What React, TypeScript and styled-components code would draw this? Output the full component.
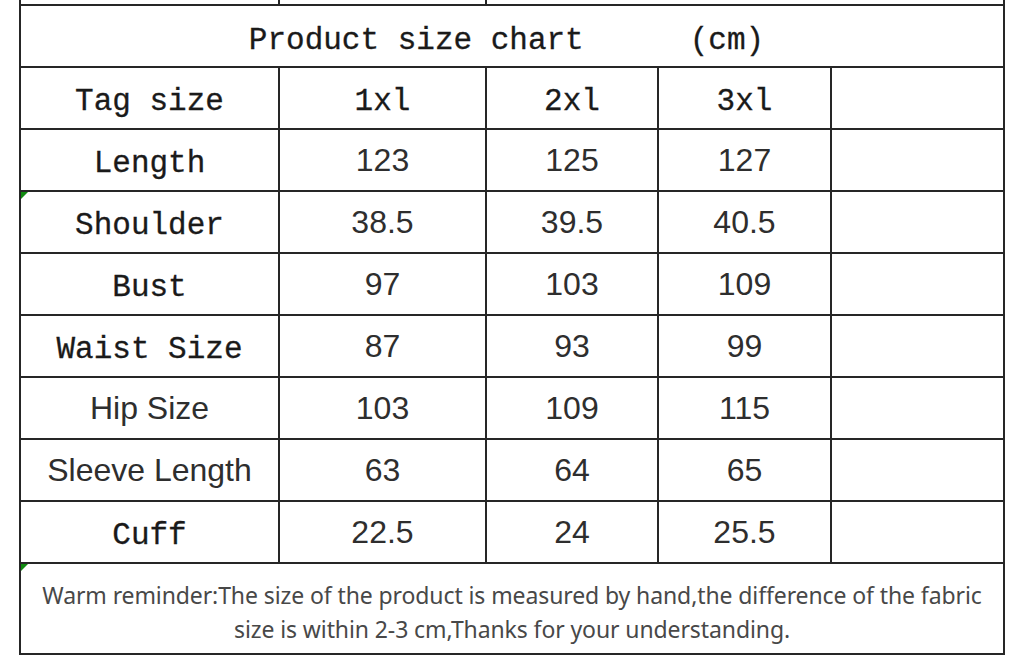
import * as React from 'react';
import styled, { createGlobalStyle } from 'styled-components';

const lineColor = '#262626';

const GlobalStyle = createGlobalStyle`
  html, body {
    margin: 0;
    padding: 0;
    background: #ffffff;
  }
  body {
    width: 1018px;
    height: 662px;
    overflow: hidden;
  }
`;

const Chart = styled.div`
  margin-left: 19px;
  width: 986px;
  box-sizing: border-box;
  display: grid;
  grid-template-columns: 257px 205px 170px 171px 171px;
  grid-template-rows: 4px repeat(9, 60px) 89px;
  gap: 2px;
  padding: 0 2px 2px 2px;
  background: ${lineColor};
`;

const Cell = styled.div<{ $span?: number; $mark?: boolean }>`
  position: relative;
  background: #ffffff;
  display: flex;
  align-items: center;
  justify-content: center;
  grid-column: span ${p => p.$span || 1};

  ${p =>
    p.$mark &&
    `
    &::before {
      content: '';
      position: absolute;
      top: 0;
      left: 0;
      width: 0;
      height: 0;
      border-top: 7px solid #108a10;
      border-right: 7px solid transparent;
    }
  `}
`;

const TitleCell = styled(Cell)`
  gap: 106px;
  padding: 9px 11px 0 0;
`;

const MonoText = styled.span`
  font-family: 'Liberation Mono', 'DejaVu Sans Mono', monospace;
  font-size: 31px;
  color: #1a1a1a;
  white-space: pre;
  padding-top: 7px;
  -webkit-text-stroke: 0.3px #1a1a1a;
`;

const TitleText = styled(MonoText)`
  padding-top: 0;
`;

const SansText = styled.span`
  font-family: 'Liberation Sans', Arial, sans-serif;
  font-size: 32px;
  color: #2e2e2e;
`;

const Note = styled.p`
  margin: 0;
  padding-top: 6px;
  font-family: 'Noto Sans', 'Open Sans', sans-serif;
  font-size: 23px;
  line-height: 34px;
  letter-spacing: -0.1px;
  color: #484848;
  text-align: center;
`;

type Row = {
  label: string;
  mono: boolean;
  values: string[];
  mark?: boolean;
};

const rows: Row[] = [
  { label: 'Length', mono: true, values: ['123', '125', '127'] },
  { label: 'Shoulder', mono: true, values: ['38.5', '39.5', '40.5'], mark: true },
  { label: 'Bust', mono: true, values: ['97', '103', '109'] },
  { label: 'Waist Size', mono: true, values: ['87', '93', '99'] },
  { label: 'Hip Size', mono: false, values: ['103', '109', '115'] },
  { label: 'Sleeve Length', mono: false, values: ['63', '64', '65'] },
  { label: 'Cuff', mono: true, values: ['22.5', '24', '25.5'] },
];

export default function App() {
  return (
    <>
      <GlobalStyle />
      <Chart>
        {/* tail of the row above, cut off by the top edge */}
        <Cell />
        <Cell />
        <Cell $span={3} />

        <TitleCell $span={5}>
          <TitleText>Product size chart</TitleText>
          <TitleText>(cm)</TitleText>
        </TitleCell>

        <Cell>
          <MonoText>Tag size</MonoText>
        </Cell>
        <Cell>
          <MonoText>1xl</MonoText>
        </Cell>
        <Cell>
          <MonoText>2xl</MonoText>
        </Cell>
        <Cell>
          <MonoText>3xl</MonoText>
        </Cell>
        <Cell />

        {rows.map(row => (
          <React.Fragment key={row.label}>
            <Cell $mark={row.mark}>
              {row.mono ? <MonoText>{row.label}</MonoText> : <SansText>{row.label}</SansText>}
            </Cell>
            {row.values.map((v, i) => (
              <Cell key={i}>
                <SansText>{v}</SansText>
              </Cell>
            ))}
            <Cell />
          </React.Fragment>
        ))}

        <Cell $span={5} $mark>
          <Note>
            Warm reminder:The size of the product is measured by hand,the difference of the fabric
            <br />
            size is within 2-3 cm,Thanks for your understanding.
          </Note>
        </Cell>
      </Chart>
    </>
  );
}
